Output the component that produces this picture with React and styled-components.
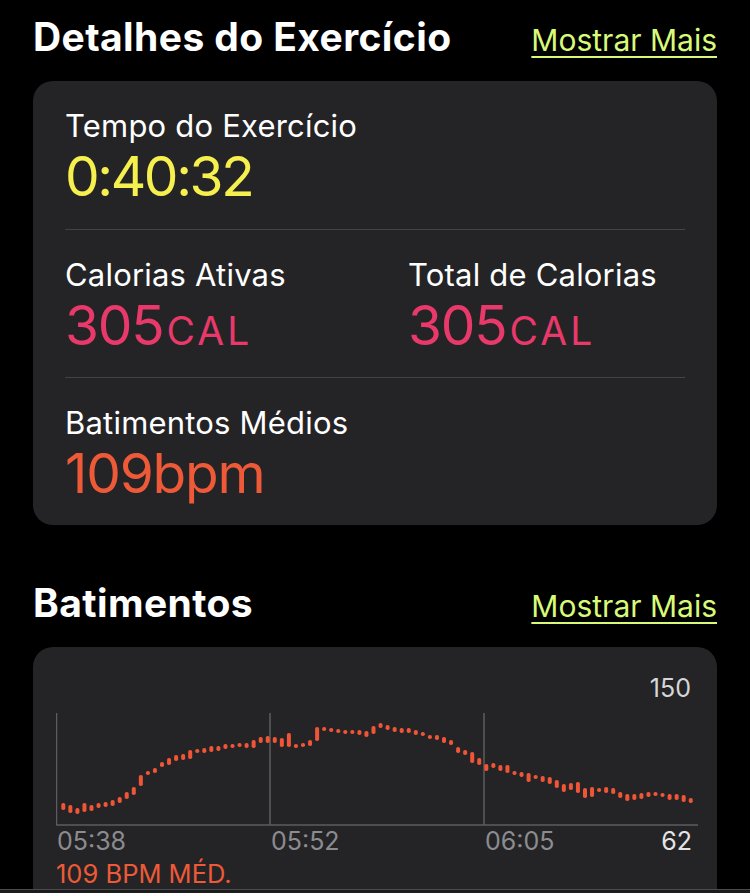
import React from "react";
import styled, { createGlobalStyle } from "styled-components";

const GlobalStyle = createGlobalStyle`
  html, body {
    margin: 0;
    padding: 0;
    background: #000;
  }
  body {
    font-family: Inter, "Noto Sans", "Liberation Sans", sans-serif;
    -webkit-font-smoothing: antialiased;
  }
`;

const Screen = styled.div`
  height: 100vh;
  display: flex;
  flex-direction: column;
  background: #000;
  color: #fff;
  overflow: hidden;
`;

const Scroll = styled.div`
  flex: 1;
  overflow: hidden;
  padding: 0 33px;
`;

const TabBar = styled.div`
  height: 3px;
  flex-shrink: 0;
  border-top: 1px solid #4a4a4d;
  background: #1c1c1e;
`;

const Header = styled.div`
  display: flex;
  justify-content: space-between;
  align-items: baseline;
  margin-top: ${(p) => p.top}px;
  margin-bottom: 21px;
`;

const Title = styled.h2`
  margin: 0;
  font-size: 39px;
  line-height: 46px;
  font-weight: 700;
  letter-spacing: 0.4px;
  color: #fff;
`;

const MoreLink = styled.a`
  font-size: 30px;
  line-height: 36px;
  font-weight: 400;
  color: #d8fa78;
  text-decoration: underline;
  text-decoration-thickness: 2px;
  text-underline-offset: 5px;
  cursor: pointer;
`;

const Card = styled.div`
  background: #242426;
  border-radius: 20px;
  padding: ${(p) => p.pad || "0 32px"};
`;

const Section = styled.div`
  display: grid;
  grid-template-columns: ${(p) => (p.cols === 2 ? "343px 1fr" : "1fr")};
  height: 148px;
  padding-top: 27px;
  box-sizing: border-box;
  border-top: ${(p) => (p.first ? "none" : "1px solid #434346")};
`;

const Metric = styled.div`
  display: flex;
  flex-direction: column;
`;

const Label = styled.div`
  font-size: 31px;
  line-height: 36px;
  letter-spacing: 0.2px;
  color: #fff;
`;

const Value = styled.div`
  margin-top: 2px;
  font-size: 55px;
  line-height: 60px;
  font-weight: 400;
  letter-spacing: ${(p) => p.tight ? "-2.4px" : "-1.2px"};
  color: ${(p) => p.color};
`;

const Unit = styled.span`
  font-size: 39px;
  letter-spacing: 3px;
  margin-left: 3px;
`;

const TopLabel = styled.div`
  text-align: right;
  padding-right: 26px;
  font-size: 25px;
  line-height: 30px;
  color: #d6d6d8;
`;

const Plot = styled.div`
  margin-top: 10px;
  padding: 0 19px 0 23px;
  line-height: 0;
`;

const AxisRow = styled.div`
  display: grid;
  grid-template-columns: 214px 214px 1fr;
  margin: 0 19px 0 23px;
  font-size: 25px;
  line-height: 30px;
  color: #8c8c90;
`;

const AxisCell = styled.div`
  display: flex;
  justify-content: space-between;
  padding-left: 1px;
  padding-right: ${(p) => (p.last ? "6px" : "0")};
`;

const AxisMax = styled.span`
  color: #e4e4e6;
`;

const Average = styled.div`
  margin: 4px 0 0 23px;
  font-size: 25.5px;
  line-height: 28px;
  color: #ee5a38;
  padding-bottom: 40px;
`;

const beats = [
  [90, 97], [92, 100], [95, 101], [90, 99], [92, 98], [90, 95], [89, 94], [87, 93],
  [84, 90], [79, 86], [74, 82], [62, 73], [58, 61], [55, 60], [49, 54], [45, 52],
  [42, 48], [41, 47], [37, 46], [36, 40], [35, 40], [33, 39], [33, 38], [31, 36],
  [31, 35], [30, 34], [30, 35], [27, 35], [24, 30], [23, 30], [24, 30], [25, 34],
  [20, 34], [31, 35], [30, 34], [27, 33], [14, 28], [14, 18], [15, 19], [16, 20],
  [17, 21], [17, 21], [17, 22], [18, 24], [13, 21], [10, 15], [12, 17], [14, 19],
  [15, 20], [15, 20], [17, 22], [19, 23], [22, 26], [22, 27], [24, 30], [27, 32],
  [34, 40], [37, 42], [39, 50], [45, 52], [51, 58], [50, 55], [52, 58], [52, 60],
  [58, 62], [59, 64], [60, 69], [62, 65], [63, 69], [64, 71], [67, 75], [71, 79],
  [70, 77], [69, 80], [75, 85], [74, 84], [75, 79], [74, 80], [75, 81], [79, 85],
  [81, 88], [81, 87], [80, 86], [79, 84], [79, 83], [80, 84], [81, 87], [81, 87],
  [82, 89], [85, 90],
];

const HeartChart = () => (
  <svg width="642" height="113" viewBox="0 0 642 113">
    {[0.5, 214, 428].map((x) => (
      <line key={x} x1={x} y1="0" x2={x} y2="112" stroke="#5c5c60" strokeWidth="1.5" />
    ))}
    <line x1="0" y1="112" x2="642" y2="112" stroke="#5c5c60" strokeWidth="1.5" />
    {beats.map(([top, bottom], i) => (
      <rect
        key={i}
        x={5.3 + i * 7.05}
        y={top}
        width="4"
        height={Math.max(bottom - top, 4)}
        rx="1.8"
        fill="#ef5536"
      />
    ))}
  </svg>
);

export default function App() {
  return (
    <Screen>
      <GlobalStyle />
      <Scroll>
        <Header top={14}>
          <Title>Detalhes do Exercício</Title>
          <MoreLink>Mostrar Mais</MoreLink>
        </Header>
        <Card>
          <Section first>
            <Metric>
              <Label>Tempo do Exercício</Label>
              <Value color="#f6f04e" tight>0:40:32</Value>
            </Metric>
          </Section>
          <Section cols={2}>
            <Metric>
              <Label>Calorias Ativas</Label>
              <Value color="#e8396a">
                305<Unit>CAL</Unit>
              </Value>
            </Metric>
            <Metric>
              <Label>Total de Calorias</Label>
              <Value color="#e8396a">
                305<Unit>CAL</Unit>
              </Value>
            </Metric>
          </Section>
          <Section>
            <Metric>
              <Label>Batimentos Médios</Label>
              <Value color="#ee5a38">109bpm</Value>
            </Metric>
          </Section>
        </Card>

        <Header top={55}>
          <Title>Batimentos</Title>
          <MoreLink>Mostrar Mais</MoreLink>
        </Header>
        <Card pad="26px 0 0 0">
          <TopLabel>150</TopLabel>
          <Plot>
            <HeartChart />
          </Plot>
          <AxisRow>
            <AxisCell>05:38</AxisCell>
            <AxisCell>05:52</AxisCell>
            <AxisCell last>
              <span>06:05</span>
              <AxisMax>62</AxisMax>
            </AxisCell>
          </AxisRow>
          <Average>109 BPM MÉD.</Average>
        </Card>
      </Scroll>
      <TabBar />
    </Screen>
  );
}
